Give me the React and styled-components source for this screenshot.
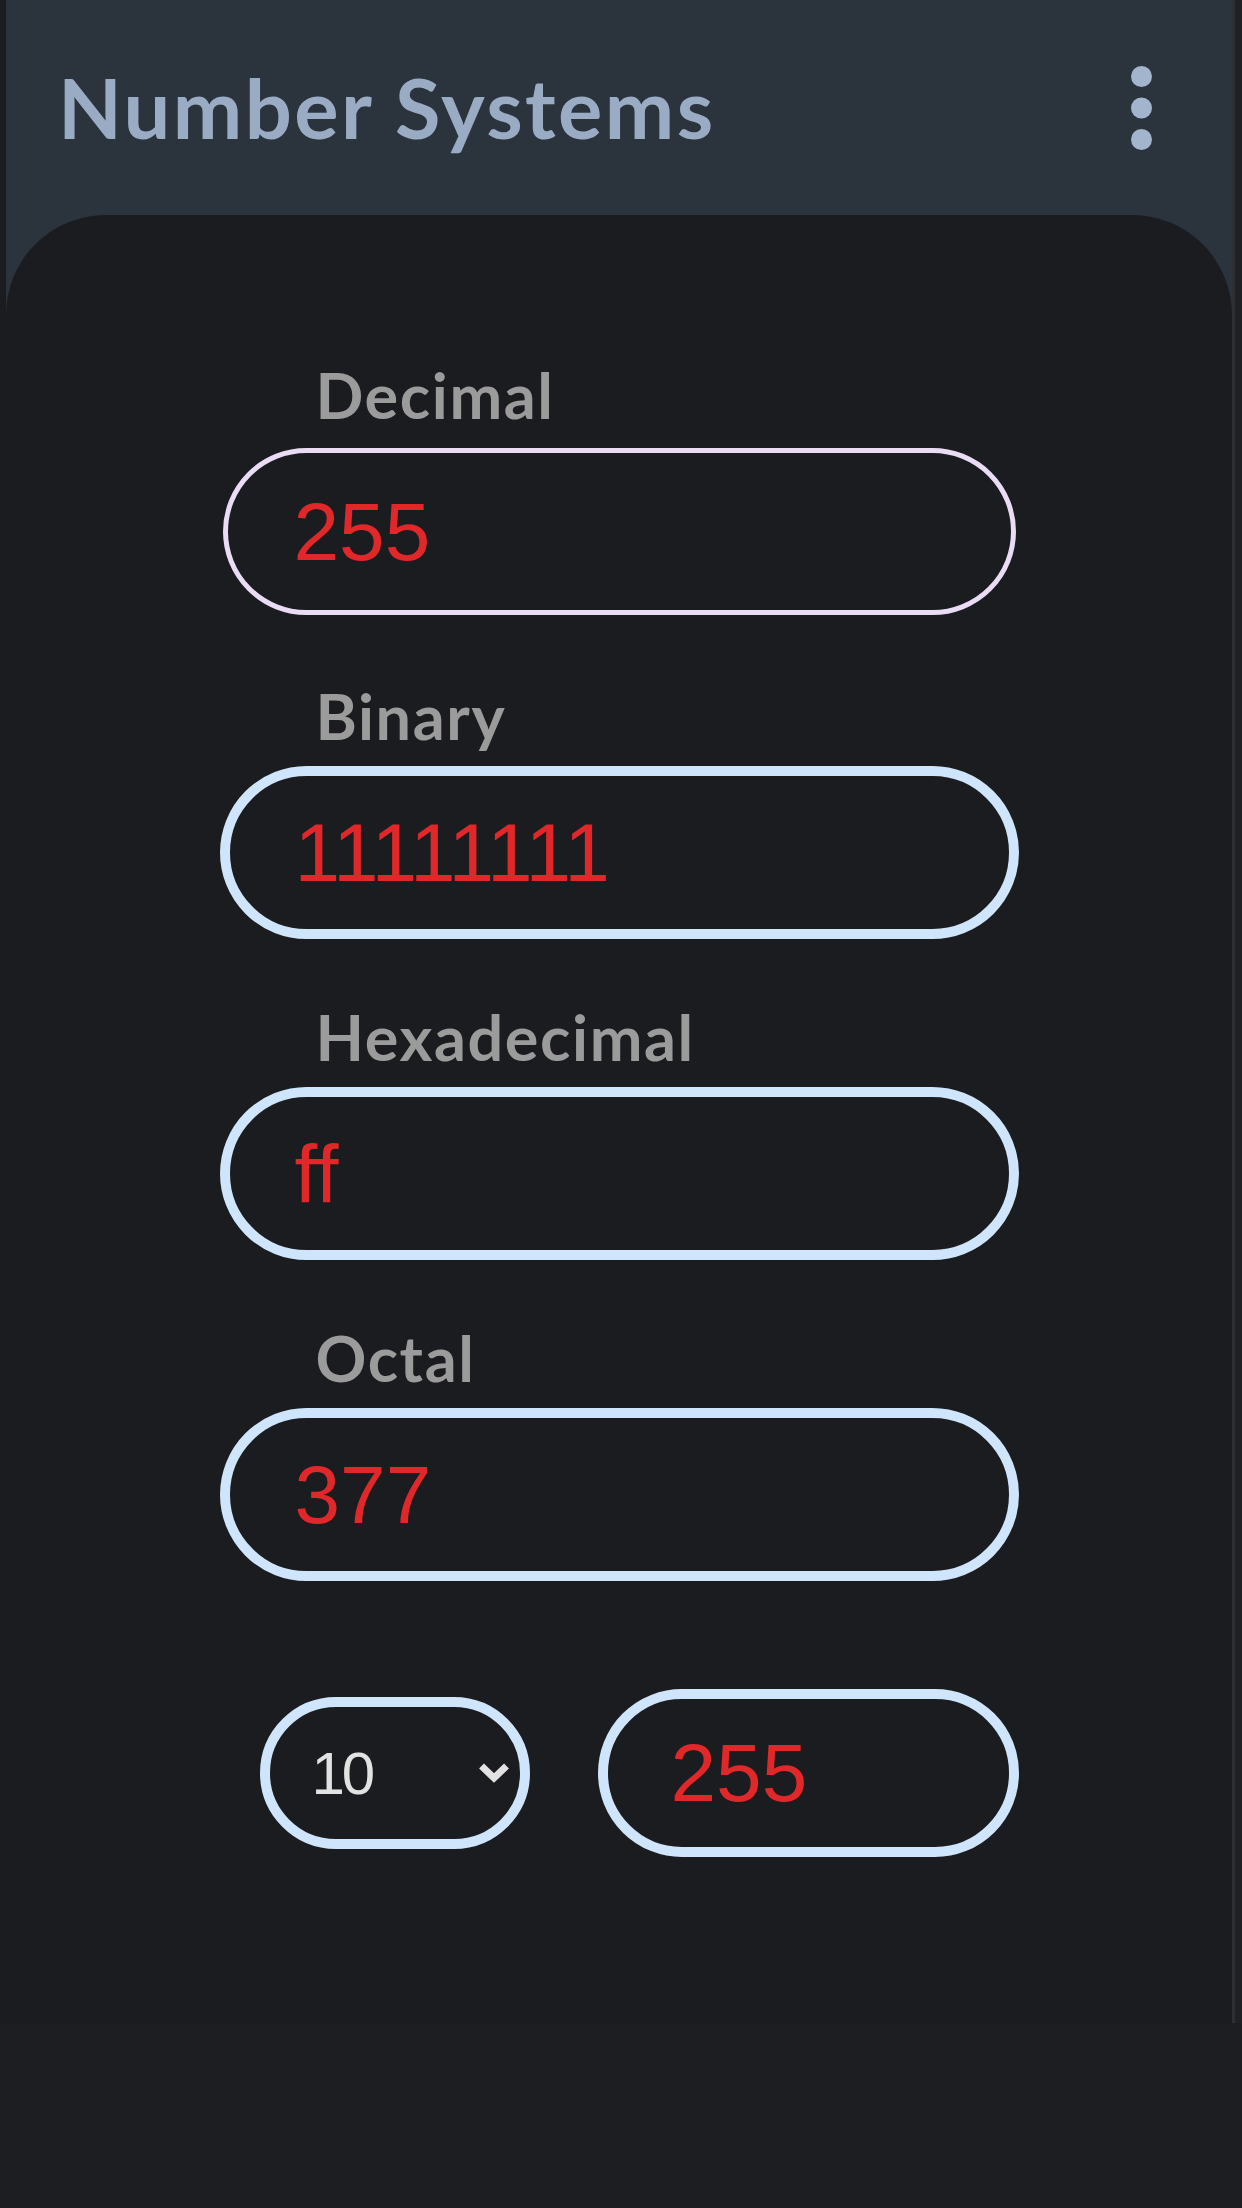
import React from 'react';
import styled, { createGlobalStyle } from 'styled-components';

const GlobalStyle = createGlobalStyle`
  html, body { margin: 0; padding: 0; background: #1c1e21; }
  body { font-family: "Liberation Sans", Arial, sans-serif; }
  * { box-sizing: border-box; }
`;

const Page = styled.div`
  width: 1242px;
  min-height: 2208px;
  background: #1c1e21;
`;

const Screen = styled.div`
  display: flex;
  height: 2023px;
`;

const LeftEdge = styled.div`
  width: 6px;
  background: #1a1c1f;
`;

const Main = styled.div`
  flex: 1;
  display: flex;
  flex-direction: column;
  background: #2b333c;
`;

const ScrollTrack = styled.div`
  width: 10px;
  background: #1e2023;
  border-left: 3px solid #2c2f33;
`;

const Header = styled.header`
  height: 215px;
  flex: none;
  display: flex;
  align-items: center;
  justify-content: space-between;
  padding: 0 80px 0 52px;
`;

const Title = styled.h1`
  margin: 0;
  font-family: Lato, "Noto Sans", sans-serif;
  font-weight: 700;
  font-size: 83px;
  letter-spacing: 2.4px;
  line-height: 1.2;
  color: #9aabc4;
`;

const MenuButton = styled.button`
  display: flex;
  padding: 0;
  border: 0;
  background: none;
`;

const Card = styled.main`
  flex: 1;
  background: #1a1c1f;
  border-radius: 100px 100px 0 0;
  display: flex;
  flex-direction: column;
  align-items: center;
  padding-top: 142px;
`;

const Form = styled.div`
  width: 799px;
  display: flex;
  flex-direction: column;
  gap: 60px;
`;

const Field = styled.label`
  display: flex;
  flex-direction: column;
`;

const Label = styled.span`
  font-family: Lato, "Noto Sans", sans-serif;
  font-weight: 700;
  font-size: 63px;
  letter-spacing: 1.6px;
  line-height: 76px;
  color: #9b9b9b;
  margin: 0 0 12px 96px;
`;

const ValueInput = styled.input`
  display: block;
  width: ${(p) => (p.$focused ? 'calc(100% - 6px)' : '100%')};
  height: ${(p) => p.$height - (p.$focused ? 6 : 0)}px;
  margin: ${(p) => (p.$focused ? '3px' : '0')};
  padding: 0 0 0 ${(p) => p.$pad}px;
  border: ${(p) => (p.$focused ? '5px solid #ebdcf6' : '10px solid #cfe5fb')};
  border-radius: 999px;
  background: #1a1c1f;
  color: #e0282a;
  font-family: "Liberation Sans", Arial, sans-serif;
  font-size: 82px;
  letter-spacing: ${(p) => p.$spacing || 0}px;
  outline: none;
`;

const ConvertRow = styled.div`
  display: flex;
  align-items: center;
  gap: 68px;
  margin-top: 48px;
  padding-left: 40px;
`;

const SelectWrap = styled.div`
  position: relative;
  width: 270px;
  height: 152px;
  flex: none;
`;

const BaseSelect = styled.select`
  appearance: none;
  -webkit-appearance: none;
  width: 100%;
  height: 100%;
  padding: 0 0 0 42px;
  border: 10px solid #cfe5fb;
  border-radius: 999px;
  background: #1a1c1f;
  color: #e2e2e2;
  font-family: "Liberation Sans", Arial, sans-serif;
  font-size: 60px;
  letter-spacing: -3px;
  outline: none;
`;

const Chevron = styled.svg`
  position: absolute;
  right: 20px;
  top: 50%;
  transform: translateY(-50%);
  pointer-events: none;
`;

const RowInputSlot = styled.div`
  flex: 1;
`;

const fields = [
  { label: 'Decimal', value: '255', focused: true, pad: 66 },
  { label: 'Binary', value: '11111111', pad: 65, spacing: -1 },
  { label: 'Hexadecimal', value: 'ff', pad: 65 },
  { label: 'Octal', value: '377', pad: 65 },
];

export default function App() {
  return (
    <Page>
      <GlobalStyle />
      <Screen>
        <LeftEdge />
        <Main>
          <Header>
            <Title>Number Systems</Title>
            <MenuButton aria-label="More options">
              <svg width="21" height="84" viewBox="0 0 21 84">
                <circle cx="10.5" cy="10.5" r="10.5" fill="#a3b5cd" />
                <circle cx="10.5" cy="42" r="10.5" fill="#a3b5cd" />
                <circle cx="10.5" cy="73.5" r="10.5" fill="#a3b5cd" />
              </svg>
            </MenuButton>
          </Header>
          <Card>
            <Form>
              {fields.map((f) => (
                <Field key={f.label}>
                  <Label>{f.label}</Label>
                  <ValueInput
                    defaultValue={f.value}
                    spellCheck={false}
                    autoComplete="off"
                    $focused={f.focused}
                    $spacing={f.spacing}
                    $height={173}
                    $pad={f.pad}
                  />
                </Field>
              ))}
              <ConvertRow>
                <SelectWrap>
                  <BaseSelect defaultValue="10" aria-label="Base">
                    <option value="2">2</option>
                    <option value="8">8</option>
                    <option value="10">10</option>
                    <option value="16">16</option>
                  </BaseSelect>
                  <Chevron width="32" height="24" viewBox="0 0 32 24">
                    <polyline
                      points="3.5,5 16,17 28.5,5"
                      fill="none"
                      stroke="#e2e2e2"
                      strokeWidth="7"
                      strokeLinejoin="miter"
                    />
                  </Chevron>
                </SelectWrap>
                <RowInputSlot>
                  <ValueInput
                    defaultValue="255"
                    spellCheck={false}
                    autoComplete="off"
                    aria-label="Value"
                    $height={168}
                    $pad={63}
                  />
                </RowInputSlot>
              </ConvertRow>
            </Form>
          </Card>
        </Main>
        <ScrollTrack />
      </Screen>
    </Page>
  );
}
